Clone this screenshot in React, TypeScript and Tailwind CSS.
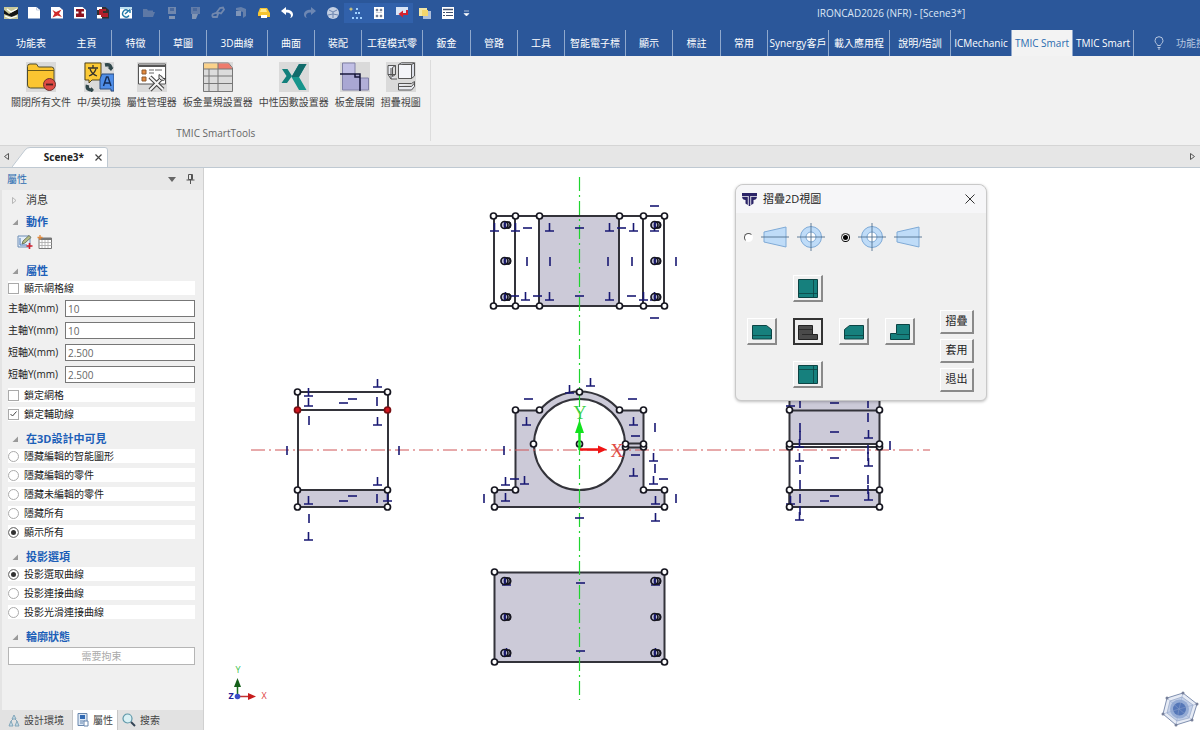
import React from "react";

type Pt = [number, number];

/* ---------- Quick access bar ---------- */

const Svg = ({ size = 14, children, box = "0 0 14 14" }: { size?: number; children: React.ReactNode; box?: string }) => (
  <svg width={size} height={size} viewBox={box} fill="none" aria-hidden="true">
    {children}
  </svg>
);

const Sheet = () => <path d="M1 1h8.5L13 4v8.500H1z" fill="#fff" />;

const quickIcons: { name: string; lit?: boolean; art: React.ReactNode }[] = [
  { name: "New", art: <><Sheet /><path d="M9.500 1v3H13" stroke="#b9c6dc" strokeWidth=".8" /></> },
  { name: "New part", art: <><Sheet /><path d="M2.500 4l3.500 2L11.500 3.500 9 7.500l3 3.500-4.500-1.500L2.500 11.500l2-4z" fill="#d12a2a" /></> },
  { name: "New scene", art: <><Sheet /><path d="M3 3h8v2.500H8.500v2H11V11H3V7.500h2.500v-2H3z" fill="#8f1420" /></> },
  { name: "New drawing", art: <><path d="M1 1h8.500L13 4v8.500H1z" fill="#33302f" /><path d="M1 1h5v3H1zM1 9h5v3.500H1z" fill="#fff" /><path d="M3 3h7v2H7v2h5v4H5V9H3z" fill="#b3202b" /></> },
  { name: "Refresh", art: <><Sheet /><rect x="1" y="1" width="12" height="2" fill="#bfe0f0" /><path d="M9 4.500a3.500 3.500 0 1 0 1 5M6 8l5-4.500M11 3.500V7" stroke="#2279a8" strokeWidth="1.400" /></> },
  { name: "Open", art: <path d="M1 3h4l1 1.500h5V6h2l-2 5H1z" fill="#5e79a6" /> },
  { name: "Save", art: <><path d="M3 1h8v7H3z" fill="#6f87ae" /><path d="M4 10h6v3H4z" fill="#8194b2" /><path d="M5 2h4v3H5z" fill="#49699d" /></> },
  { name: "Save as", art: <><path d="M3 1h9v7H3z" fill="#627ca8" /><path d="M4 8h6l-2 5H4z" fill="#8295b3" /><path d="M5 2h4v3H5z" fill="#49699d" /></> },
  { name: "Link", art: <path d="M2 11a2 2 0 0 1 0-3l3-1 2 1-1 3zM6 6l3-4 3-.5 1 2-3 4z" stroke="#7188ae" strokeWidth="1.800" /> },
  { name: "Export", art: <><path d="M2 2l5-1 5 2v7l-3 2V6L2 4z" fill="#6580ab" /><path d="M2 5h5v5H2z" fill="#7f95b8" /></> },
  { name: "Print", art: <><path d="M3 2h7l3 5v4H1V7z" fill="#f5c431" /><path d="M4 3h5l1 3H3z" fill="#ffe88c" /><path d="M4 9h6v3H4z" fill="#fff" /><path d="M1 10h3v2H1z" fill="#3b4f74" /></> },
  { name: "Undo", art: <path d="M6 1L1 5l5 4V6.500c3-.3 5 1 5 3.500 0 .7-.4 1.500-1 2 2.500-.6 3-2 3-3.500 0-3-3-5-7-4.800z" fill="#fff" /> },
  { name: "Redo", art: <path d="M8 1l5 4-5 4V6.500C5 6.200 3 7.500 3 10c0 .7.400 1.500 1 2C1.500 11.400 1 10 1 8.500c0-3 3-5 7-4.800z" fill="#6d87b3" /> },
  { name: "Render", art: <><circle cx="7" cy="7" r="6" fill="#c4d0e4" /><path d="M3 4l4 2 4-2M7 6v6M2 9l5-1 5 1" stroke="#6d86b0" /></> },
  { name: "Nodes", lit: true, art: <><path d="M2 1l.7 1.500L4.500 3l-1.800.7L2 5.500l-.7-1.800L-.5 3l1.800-.5z" fill="#e0cf77" /><path d="M7 2h2v2H7zM6 6h2v2H6zM9 6h2v2H9zM3 11h2v2H3zM7 11h2v2H7zM11 11h2v2h-2z" fill="#9fd0ff" /></> },
  { name: "Grid", lit: true, art: <><path d="M2 1h10v12H2z" fill="#fff" /><path d="M4 3h2v2H4zM8 3h2v2H8zM4 9h2v2H4zM8 9h2v2H8zM4 6.500h6" fill="#55617a" stroke="#9aa3b5" strokeWidth=".5" /></> },
  { name: "Monitor", lit: true, art: <><path d="M1 1h12v8H1z" fill="#d9e5f7" /><path d="M12 4v4H7" stroke="#d3222f" strokeWidth="2" /><path d="M8 4.500L3.500 8 8 11.500z" fill="#d3222f" /></> },
  { name: "Copy", art: <><path d="M1 2h8v8H1z" fill="#f3e6a3" /><path d="M5 5h8v8H5z" fill="#aebfdb" /><path d="M4 4h6v6H4z" fill="#f5d66b" /></> },
  { name: "List", art: <><path d="M1 1h12v12H1z" fill="#fff" /><path d="M2 3.500h10" stroke="#41516f" strokeWidth="1.500" /><path d="M5 6.500h7M5 9.500h7M2 6.500h2M2 9.500h2" stroke="#41516f" /></> },
];

const QuickBar = () => (
  <header className="flex h-[30px] shrink-0 items-center bg-[#2b579a] pb-1">
    <div className="flex flex-1 items-center">
      <span className="flex w-[22px] items-center justify-center">
        <Svg>
          <path d="M0 1h14v12H0z" fill="#c9c99b" />
          <path d="M0 4l5 4 9-5v5l-6 3-8-3z" fill="#141414" />
          <path d="M3 3l4 3 6-3M1 10l5 2 7-2" stroke="#fff" strokeWidth="1.200" />
        </Svg>
      </span>
      {quickIcons.map((q) => (
        <button key={q.name} aria-label={q.name} className={q.lit ? "flex h-5 w-[23px] items-center justify-center bg-[#3161ab]" : "flex h-5 w-[23px] items-center justify-center"}>
          <Svg>{q.art}</Svg>
        </button>
      ))}
      <button aria-label="Customize" className="flex h-5 w-3.5 items-center justify-center">
        <Svg size={7} box="0 0 7 7"><path d="M1 1h5M1 3.500h5L3.500 6z" fill="#fff" stroke="#fff" strokeWidth=".6" /></Svg>
      </button>
    </div>
    <h1 className="w-[383px] text-[10px] text-[#dce6f5]">IRONCAD2026 (NFR) - [Scene3*]</h1>
  </header>
);

/* ---------- Ribbon tabs ---------- */

const tabs: { label: string; w: string }[] = [
  { label: "特徵", w: "w-12" },
  { label: "草圖", w: "w-[47px]" },
  { label: "3D曲線", w: "w-[61px]" },
  { label: "曲面", w: "w-[47px]" },
  { label: "裝配", w: "w-[47px]" },
  { label: "工程模式零", w: "w-[61px]" },
  { label: "鈑金", w: "w-12" },
  { label: "管路", w: "w-[47px]" },
  { label: "工具", w: "w-[47px]" },
  { label: "智能電子標", w: "w-[61px]" },
  { label: "顯示", w: "w-[47px]" },
  { label: "標註", w: "w-12" },
  { label: "常用", w: "w-[47px]" },
  { label: "Synergy客戶", w: "w-[61px]" },
  { label: "載入應用程", w: "w-[61px]" },
  { label: "說明/培訓", w: "w-[61px]" },
  { label: "ICMechanic", w: "w-[61px]" },
  { label: "TMIC Smart", w: "w-[61px]" },
  { label: "TMIC Smart", w: "w-[61px]" },
];

const RibbonTabs = () => (
  <nav className="flex h-[26px] shrink-0 overflow-hidden bg-[#2b579a] text-[10px] text-white">
    <button className="w-[62px] shrink-0">功能表</button>
    <button className="w-[50px] shrink-0 border-r border-[#8fa8cd]">主頁</button>
    {tabs.map((t, i) => (
      <button
        key={i}
        className={`${t.w} flex shrink-0 items-center justify-center border-r border-[#8fa8cd] whitespace-nowrap ${i === 17 ? "bg-[#f3f3f3] text-[#2b6cb0]" : ""}`}
      >
        {t.label}
      </button>
    ))}
    <label htmlFor="search" className="flex w-[42px] shrink-0 items-center justify-center pl-2" aria-label="Search">
      <svg width="10" height="14" viewBox="0 0 10 14" fill="none" stroke="#b7c7e0" aria-hidden="true">
        <path d="M3.500 9.500C3.500 8 1 7 1 4.700a4 4 0 0 1 8 0C9 7 6.500 8 6.500 9.500zM3.500 11.500h3M4 13h2" />
      </svg>
    </label>
    <input id="search" placeholder="功能搜" className="min-w-0 flex-1 bg-transparent outline-none placeholder:text-[#b7c7e0]" defaultValue="" />
  </nav>
);

/* ---------- Ribbon ---------- */

const Tool = ({ label, plain, children }: { label: string; plain?: boolean; children: React.ReactNode }) => (
  <button className="flex flex-col items-center gap-[3px] text-[10px] whitespace-nowrap text-[#444]">
    <svg width="30" height="30" viewBox="0 0 30 30" fill="none" aria-hidden="true">
      {!plain && <rect width="30" height="30" fill="#dadada" />}
      {children}
    </svg>
    <span className="leading-[14px]">{label}</span>
  </button>
);

const Ribbon = () => (
  <section className="flex h-[90px] shrink-0 border-b border-[#d5d5d5] bg-[#f1f1f1]">
    <div className="my-1 flex flex-col border-r border-[#dcdcdc] pr-[9px] pl-[11px]">
      <div className="flex gap-1.5 pt-0.5">
        <Tool label="關閉所有文件">
          <path d="M1.500 4.500Q1.500 2 4 2h6.500l2 3H25.500Q28 5 28 7.500V23q0 3-3 3H4.500q-3 0-3-3z" fill="#fbc531" stroke="#4d4d33" />
          <path d="M2 8.500h26" stroke="#6b5a18" />
          <circle cx="23.500" cy="22.500" r="6" fill="#e04b44" stroke="#6a3330" />
          <path d="M20 22.500h7" stroke="#4a2222" strokeWidth="1.800" />
        </Tool>
        <Tool label="中/英切換">
          <path d="M1 1h16v17H8l-3 3v-3H1z" fill="#fcca35" stroke="#54471a" />
          <path d="M4 6h10M9 3v3M6 7c1.500 4 4 6 7 7M12 7c-1.500 4-4 6-7 7" stroke="#33312b" strokeWidth="1.300" />
          <path d="M18 12h12v17h-3v-2H16V17z" fill="#4f8ee8" stroke="#2b4a7c" />
          <path d="M19.500 24l3-9h1.500l3 9M20.500 21h5.500" stroke="#152d57" strokeWidth="1.400" />
          <path d="M21 3c5-1 6 1 6 4" stroke="#30474b" strokeWidth="3.500" />
          <path d="M23.500 5.500h6L27 9z" fill="#30474b" />
          <path d="M3.500 23c-1 4 1 5 5 5" stroke="#30474b" strokeWidth="3.500" />
          <path d="M7 25l3 3-3 2.500z" fill="#30474b" />
        </Tool>
        <Tool label="屬性管理器">
          <path d="M1.500 2h27v20h-27z" fill="#fff" stroke="#555" />
          <path d="M1.500 4h27" stroke="#555" strokeWidth="2" />
          <path d="M5 8h4v4H5zM5 15h4v4H5z" fill="#e58a3c" stroke="#8c5a30" />
          <path d="M12 8h5M12 11h5M18 8h7" stroke="#666" />
          <path d="M13 15l13 12.500M26 15L13 28" stroke="#444" strokeWidth="4.200" />
          <path d="M13 15l13 12.500M26 15L13 28" stroke="#f5f5f5" strokeWidth="2" />
          <path d="M22 12.500q-1 4 2 5.500t5-1.500l-3 0-1.500-2z" fill="#eee" stroke="#444" />
        </Tool>
        <Tool label="板金量規設置器">
          <path d="M.5 1h25l4 5v23.500H.5z" fill="#dcdcdc" stroke="#777" />
          <path d="M1 1.500h14V7H1z" fill="#fbd28a" />
          <path d="M15 1.500h10.500L29 6v1H15z" fill="#ee7b6c" />
          <path d="M.5 7h29M.5 14h29M.5 21.500h29M6 7v22M15 1v28" stroke="#777" />
        </Tool>
        <Tool label="中性因數設置器">
          <path d="M3 7h5.500l4.500 7-5 7H2.500l5-7z" fill="#13807c" />
          <path d="M20 2h7.500l-7.500 13 7.500 13H20l-7.500-13z" fill="#16958c" />
          <path d="M20 2h7.500l-7.500 13h-7.500z" fill="#126b6b" />
        </Tool>
        <Tool label="板金展開">
          <path d="M2 1h13v12h5v15H2z" fill="#a9a7d3" />
          <path d="M2 1h13v12H2z" fill="#c1bfe5" />
          <path d="M20 16h9v12h-9z" fill="#b1afd8" />
          <path d="M2.500 28V1H15v12M20 16h8.500v12H2.500" stroke="#8080a6" />
          <path d="M0 12h20v17M15 12v3h5" stroke="#16163a" strokeWidth="1.500" />
        </Tool>
        <Tool label="摺疊視圖">
          <path d="M12.500 2.500h13v14h-13z" fill="#f3f4f8" stroke="#555" />
          <path d="M25.500 2.500l3-1.500v13l-3 2.500zM12.500 2.500L15.500.8h13" fill="#dcdfe8" stroke="#555" />
          <path d="M2 3.500h7.500v9H2zM2 12.500L5 17h6M9.500 3.500l-3 2v9l3-2M5 17V6" fill="#e8eaf0" stroke="#555" />
          <path d="M12.500 21.500h13l3-2v5l-3 3.500h-13zM12.500 24.500h13l3-3.500" fill="#e8eaf0" stroke="#555" />
        </Tool>
      </div>
      <p className="mt-auto text-center text-[10px] leading-4 text-[#666]">TMIC SmartTools</p>
    </div>
  </section>
);

const DocTabs = () => (
  <div className="flex h-[22px] shrink-0 items-end border-b border-[#bfc9d2] bg-[#e6e6e6]">
    <button aria-label="Previous" className="flex h-full w-3 items-center justify-center">
      <svg width="5" height="7" viewBox="0 0 5 7" fill="none" stroke="#555"><path d="M4.500.5v6L.5 3.500z" /></svg>
    </button>
    <div className="relative flex h-5 w-24 items-center justify-end gap-2 pr-1">
      <svg className="absolute inset-0 h-full w-full" viewBox="0 0 96 20" preserveAspectRatio="none" aria-hidden="true">
        <path d="M0 20L13 3q2-2.500 5-2.500h75q2.500 0 2.500 2.500v17" fill="#fff" stroke="#bfc9d2" />
      </svg>
      <span className="relative text-[10px] font-bold text-[#222]">Scene3*</span>
      <button aria-label="Close Scene3" className="relative flex h-3 w-3 items-center justify-center">
        <svg width="7" height="7" viewBox="0 0 7 7" stroke="#444" strokeWidth="1.200"><path d="M.5.5l6 6M6.500.5l-6 6" /></svg>
      </button>
    </div>
    <button aria-label="Next" className="ml-auto flex h-full w-4 items-center justify-center">
      <svg width="5" height="7" viewBox="0 0 5 7" fill="none" stroke="#555"><path d="M.5.5v6l4-3z" /></svg>
    </button>
  </div>
);

/* ---------- Property panel ---------- */

const Head = ({ label, closed }: { label: string; closed?: boolean }) => (
  <h2 className={closed ? "flex h-5 items-center gap-2 pl-1 text-[11px] text-[#333]" : "flex h-5 items-center gap-2 pl-1 text-[11px] font-bold text-[#1c5fb8]"}>
    <svg width="6" height="7" viewBox="0 0 6 7" aria-hidden="true">
      {closed ? <path d="M.5.5v6L4 3.500z" fill="none" stroke="#aaa" strokeWidth=".8" /> : <path d="M6 .5V6H.5z" fill="#999" />}
    </svg>
    {label}
  </h2>
);

const Check = ({ label, on }: { label: string; on?: boolean }) => (
  <label className="relative flex h-3.5 items-center gap-[5px] bg-white">
    <input type="checkbox" defaultChecked={on} className="peer h-[11px] w-[11px] shrink-0 appearance-none border border-[#aaa] bg-white" />
    <svg className="absolute top-1 left-0.5 hidden peer-checked:block" width="7" height="6" viewBox="0 0 7 6" fill="none" stroke="#444"><path d="M.5 3L2.500 5l4-4.500" /></svg>
    {label}
  </label>
);

const Radio = ({ label, name, on }: { label: string; name: string; on?: boolean }) => (
  <label className="flex h-3.5 items-center gap-[5px] bg-white">
    <input
      type="radio"
      name={name}
      defaultChecked={on}
      className="h-[11px] w-[11px] shrink-0 appearance-none rounded-full border border-[#aaa] bg-white checked:border-[#888] checked:bg-[#333] checked:shadow-[inset_0_0_0_2px_white]"
    />
    {label}
  </label>
);

const Field = ({ id, label, value }: { id: string; label: string; value: string }) => (
  <div className="flex h-[17px] items-center">
    <label htmlFor={id} className="w-[57px] shrink-0 whitespace-nowrap">{label}</label>
    <input id={id} defaultValue={value} className="h-full min-w-0 flex-1 border border-[#777] bg-white px-0.5 text-[#666]" />
  </div>
);

const Panel = () => (
  <aside className="flex w-[204px] shrink-0 flex-col border-r border-[#d0d0d0] bg-[#f0f0f0] text-[10px] text-[#222]">
    <div className="flex h-[22px] shrink-0 items-center bg-[#e8e8e8] pr-2 pl-[7px]">
      <span className="flex-1 text-[#2b6cb0]">屬性</span>
      <button aria-label="Menu" className="mr-2.5"><svg width="8" height="5" viewBox="0 0 8 5"><path d="M0 0h8L4 5z" fill="#666" /></svg></button>
      <button aria-label="Pin"><svg width="9" height="10" viewBox="0 0 9 10" fill="none" stroke="#555"><path d="M2.500.5h4v5h-4zM5.500 1v4M.5 6h8M4.500 6v4" /></svg></button>
    </div>
    <div className="flex flex-1 flex-col border-l-2 border-[#e4e4e4] pr-2 pl-[6px]">
      <Head label="消息" closed />
      <div className="mt-0.5"><Head label="動作" /></div>
      <div className="flex h-5 items-center gap-1 pl-[9px]">
        <button aria-label="Edit sketch">
          <svg width="16" height="14" viewBox="0 0 16 14" fill="none">
            <path d="M1 1h12v11H1z" fill="#e4eef8" stroke="#6d8db5" />
            <path d="M3 3v7h7" stroke="#4a79b8" />
            <path d="M5 9l1-3 6-5.500 2 2L8 8z" fill="#b5bd85" stroke="#5c6650" strokeWidth=".8" />
            <path d="M12.500 8v6M9.500 11h6" stroke="#d21f2c" strokeWidth="1.600" />
          </svg>
        </button>
        <button aria-label="New table">
          <svg width="16" height="14" viewBox="0 0 16 14" fill="none">
            <path d="M2 3h12.500v10.500H2z" fill="#fff" stroke="#777" />
            <path d="M2 4h12.500" stroke="#777" strokeWidth="2" />
            <path d="M2 7.500h12.500M2 10.500h12.500M5 5v8M8 5v8M11 5v8" stroke="#aaa" strokeWidth=".8" />
            <path d="M3 0v5M.5 2.500h5" stroke="#e2893b" strokeWidth="1.300" />
          </svg>
        </button>
      </div>
      <div className="mt-[9px]"><Head label="屬性" /></div>
      <div className="flex flex-col gap-[5px]">
        <Check label="顯示網格線" />
        <Field id="mx" label="主軸X(mm)" value="10" />
        <Field id="my" label="主軸Y(mm)" value="10" />
        <Field id="sx" label="短軸X(mm)" value="2.500" />
        <Field id="sy" label="短軸Y(mm)" value="2.500" />
        <Check label="鎖定網格" />
        <Check label="鎖定輔助線" on />
      </div>
      <div className="mt-2"><Head label="在3D設計中可見" /></div>
      <div className="flex flex-col gap-[5px]">
        <Radio name="vis" label="隱藏編輯的智能圖形" />
        <Radio name="vis" label="隱藏編輯的零件" />
        <Radio name="vis" label="隱藏未編輯的零件" />
        <Radio name="vis" label="隱藏所有" />
        <Radio name="vis" label="顯示所有" on />
      </div>
      <div className="mt-2"><Head label="投影選項" /></div>
      <div className="flex flex-col gap-[5px]">
        <Radio name="proj" label="投影選取曲線" on />
        <Radio name="proj" label="投影連接曲線" />
        <Radio name="proj" label="投影光滑連接曲線" />
      </div>
      <div className="mt-2"><Head label="輪廓狀態" /></div>
      <button disabled className="h-[18px] border border-[#b5b5b5] bg-white text-[#aaa]">需要拘束</button>
    </div>
    <div className="flex h-5 shrink-0 bg-[#e2e2e2] text-[#444]">
      <button className="flex w-[72px] items-center gap-1 pl-2">
        <svg width="12" height="13" viewBox="0 0 12 13" fill="#c5dbe6" stroke="#7ba0b5" strokeWidth=".9"><path d="M6 1l2 4H4zM3 7l2 5H1zM9 7l2 5H7zM5 5L3 7M7 5l2 2" /></svg>
        設計環境
      </button>
      <button className="flex w-[46px] items-center gap-1 border-x border-[#c8c8c8] bg-white pl-1">
        <svg width="12" height="14" viewBox="0 0 12 14" fill="none"><path d="M1 .5h9v12H1z" fill="#dce8f5" stroke="#6886ad" /><path d="M3 2h5v4H3z" fill="#336bb4" /><path d="M3 8h5M3 10h3" stroke="#6886ad" /><path d="M7 8h4v5H7z" fill="#fff" stroke="#6886ad" /></svg>
        屬性
      </button>
      <button className="flex items-center gap-1 pl-1">
        <svg width="14" height="14" viewBox="0 0 14 14" fill="none"><circle cx="5.500" cy="5.500" r="4.500" fill="#d9f0f4" stroke="#5d97a8" strokeWidth="1.200" /><path d="M9 9l4 4" stroke="#345" strokeWidth="2" /></svg>
        搜索
      </button>
    </div>
  </aside>
);

/* ---------- Sketch canvas ---------- */

const perps: Pt[] = [
  [494, 231], [515, 231], [549, 231], [609, 231], [633, 231], [654, 231],
  [505, 300], [525, 300], [549, 300], [609, 300], [643, 300], [654, 300],
  [308, 396], [308, 406], [377, 387], [377, 425], [377, 485], [308, 504], [387, 501], [308, 540],
  [569, 393], [590, 386], [526, 425], [633, 425], [633, 476], [505, 485], [524, 484], [505, 501],
  [653, 461], [653, 484], [655, 504], [655, 521],
  [799, 447], [799, 461], [799, 520], [790, 504], [868, 438], [868, 466], [868, 500],
  [506, 585], [655, 585], [506, 656], [655, 656],
];
const horizontals: Pt[] = [
  [654, 206], [654, 318], [527, 228], [579, 228], [621, 228], [514, 296], [537, 296], [579, 296], [631, 296],
  [343, 403], [352, 399], [343, 501], [352, 496],
  [528, 399], [632, 399], [635, 436], [635, 455], [514, 479], [663, 479], [579, 518],
  [834, 403], [834, 432], [834, 458], [834, 496], [824, 501], [790, 406],
  [580, 583], [580, 651],
];
const verticals: Pt[] = [
  [527, 261], [550, 261], [608, 261], [632, 261], [676, 261],
  [377, 401], [309, 420], [377, 498], [309, 518], [287, 450], [399, 450],
  [504, 450], [655, 427], [655, 468], [484, 498], [676, 498],
  [800, 403], [800, 427], [800, 435], [800, 469], [800, 484], [800, 498], [800, 510],
  [868, 403], [868, 417], [868, 449], [868, 456], [868, 479], [868, 489], [890, 445],
];
const nodes: Pt[] = [
  ...[493, 515, 539, 619, 643, 664].flatMap((x): Pt[] => [[x, 216], [x, 306]]),
  ...[297, 387].flatMap((x): Pt[] => [[x, 392], [x, 490], [x, 507]]),
  [579, 392], [515, 410], [539, 410], [619, 410], [643, 410], [533, 444], [579, 444],
  [625, 447], [643, 447], [625, 444], [643, 444], [494, 490], [515, 490], [643, 490], [664, 490], [494, 507], [664, 507],
  ...[789, 879].flatMap((x): Pt[] => [[x, 410], [x, 447], [x, 444], [x, 490], [x, 507]]),
  [494, 572], [664, 572], [494, 662], [664, 662],
];
const rings: Pt[] = [225, 261, 297, 581, 617, 653].flatMap((y): Pt[] => [[505, y], [655, y]]);

const corners: Pt[] = [[1183, 693], [1197, 704], [1192, 720], [1176, 725], [1163, 714], [1167, 698]];

const Drawing = () => (
  <svg className="block h-full w-full" viewBox="204 168 996 562" fill="none" role="img" aria-label="Scene3">
    <g stroke="#33333a" strokeWidth="2">
      <path d="M494 216H664V306H494z" />
      <path d="M539 216H619V306H539z" fill="#cccad8" />
      <path d="M515 216V306M643 216V306" />
      <path d="M298 490H388V507H298z" fill="#cccad8" />
      <path d="M298 392H388V507H298zM298 410H388" />
      <path d="M515.500 410.500H539.500A51.600 51.600 0 0 1 619.500 410.500H643.500V490H664.500V507H494.500V490H515.500z" fill="#cccad8" />
      <circle cx="579.500" cy="444.500" r="45.500" fill="#fff" />
      <path d="M625 443.500H643M625 447.500H643" />
      <path d="M789.500 392H879.500V444H789.500zM789.500 490H879.500V507H789.500z" fill="#cccad8" />
      <path d="M789.500 410.500H879.500M789.500 447H879.500M789.500 444V507M879.500 444V507" />
      <path d="M494.500 572.500H664.500V662H494.500z" fill="#cccad8" />
    </g>
    <path d="M251 450H930" stroke="#cf5556" strokeDasharray="14 4 2 4" />
    <path d="M579.500 177V700" stroke="#1fd52f" strokeWidth="1.200" strokeDasharray="14 4 2 4" />
    <g stroke="#181873" strokeWidth="1.600">
      {perps.map(([x, y], i) => <path key={i} d={`M${x - 4} ${y}h9M${x + 0.5} ${y}v-8`} />)}
      {horizontals.map(([x, y], i) => <path key={i} d={`M${x - 4} ${y}h9`} />)}
      {verticals.map(([x, y], i) => <path key={i} d={`M${x} ${y - 4}v9`} />)}
    </g>
    <g stroke="#161620" strokeWidth="1.700">
      {rings.map(([x, y], i) => (
        <g key={i}>
          <circle cx={x + 2.5} cy={y} r="3" fill="#f4f4fa" />
          <circle cx={x - 0.5} cy={y} r="3.500" fill="#b9b9d6" />
          <circle cx={x + 2.5} cy={y} r="3" />
          <path d={`M${x} ${y - 3}v6`} stroke="#181873" />
        </g>
      ))}
      {nodes.map(([x, y], i) => <circle key={i} cx={x + 0.5} cy={y} r="3" fill="#fff" />)}
      <circle cx="297.500" cy="410" r="3" fill="#d3141f" stroke="#7a1014" />
      <circle cx="387.500" cy="410" r="3" fill="#d3141f" stroke="#7a1014" />
    </g>
    <path d="M579.500 450V430" stroke="#12e21e" strokeWidth="2.500" />
    <path d="M575 433L579.500 420L584 433z" fill="#12e21e" />
    <path d="M580 449.500H599" stroke="#f01414" strokeWidth="2.500" />
    <path d="M598 445.500L607 449.500L598 453.500z" fill="#f01414" />
    <text x="617" y="457" textAnchor="middle" fontSize="18" fill="#e04a44" className="font-['Liberation_Serif',serif]">X</text>
    <text x="580" y="419" textAnchor="middle" fontSize="18" fill="#38d144" className="font-['Liberation_Serif',serif]">Y</text>
    <g>
      <path d="M237.500 696V684" stroke="#196e1d" strokeWidth="1.500" />
      <path d="M234 687L237.500 678L241 687z" fill="#145f19" />
      <path d="M238 696.500H250" stroke="#c23131" strokeWidth="1.500" />
      <path d="M248 693L256 696.500L248 700z" fill="#c71c1c" />
      <circle cx="237.500" cy="696.500" r="2.800" fill="#3b4ec8" />
      <text x="238" y="673" textAnchor="middle" fontSize="9" fill="#3cc24c">Y</text>
      <text x="264" y="699" textAnchor="middle" fontSize="9" fill="#e04040">X</text>
      <text x="231" y="699" textAnchor="middle" fontSize="9" fontWeight="bold" fill="#24249a">Z</text>
    </g>
    <path d="M1183 693L1197 704L1192 720L1176 725L1163 714L1167 698z" fill="#e6ebf5" stroke="#8090b0" />
    <path d="M1182 697L1193 705L1189 718L1177 721L1167 713L1170 701z" fill="#c3d0e8" stroke="#9dadcb" strokeWidth=".8" />
    <circle cx="1179.500" cy="709" r="9.500" fill="#8aa3d0" opacity=".8" />
    <circle cx="1179.500" cy="709" r="6.500" fill="#5577b8" />
    <path d="M1183 693L1179 709L1197 704M1192 720L1179 709L1176 725M1163 714L1179 709L1167 698" stroke="#8fa3cb" strokeWidth=".7" opacity=".7" />
    {corners.map(([x, y], i) => <circle key={i} cx={x} cy={y} r="1.500" fill="#77809a" />)}
  </svg>
);

/* ---------- Fold-views dialog ---------- */

const Cone = () => (
  <svg width="28" height="26" viewBox="0 0 28 26" fill="none" aria-hidden="true">
    <path d="M3 8L25 3V23L3 18z" fill="#bfdcf8" stroke="#7faad6" />
    <path d="M0 13H28" stroke="#51708f" strokeWidth=".9" />
  </svg>
);
const Target = () => (
  <svg width="28" height="28" viewBox="0 0 28 28" fill="none" aria-hidden="true">
    <circle cx="14" cy="14" r="10.500" fill="#bfdcf8" stroke="#7faad6" />
    <circle cx="14" cy="14" r="5" fill="#fff" stroke="#7faad6" />
    <path d="M0 14H28M14 0V28" stroke="#51708f" strokeWidth=".9" />
  </svg>
);

const dialogRadio = "h-[9px] w-[9px] shrink-0 appearance-none rounded-full border border-transparent border-t-[#555] border-l-[#555] bg-white checked:bg-black checked:shadow-[inset_0_0_0_1px_white]";

const ViewButton = ({ name, place, active, body, detail }: { name: string; place: string; active?: boolean; body: string; detail: string }) => (
  <button
    aria-label={name}
    className={`${place} flex h-[27px] items-center justify-center ${active ? "border-2 border-[#333] bg-[#eee]" : "border-t border-r-2 border-b-2 border-l border-t-white border-r-[#8a8a8a] border-b-[#8a8a8a] border-l-white"}`}
  >
    <svg width="22" height="21" viewBox="0 0 22 21" fill="none" stroke={active ? "#222" : "#0c4444"} aria-hidden="true">
      <path d={body} fill={active ? "#4a4a4a" : "#16807d"} />
      <path d={detail} strokeWidth=".8" />
    </svg>
  </button>
);

const Dialog = () => (
  <section role="dialog" aria-label="摺疊2D視圖" className="absolute top-4 left-[531px] w-[252px] rounded-lg rounded-b-md border border-[#c9c9c9] bg-[#f0f0f0] text-[#222] shadow-[0_1px_3px_rgba(0,0,0,0.25)]">
    <div className="flex h-7 items-center gap-1.5 rounded-t-lg bg-[#f6f6f8] pr-[11px] pl-1.5">
      <svg width="15" height="14" viewBox="0 0 15 14" fill="#2b2467" aria-hidden="true">
        <path d="M0 1H15V4H0z" />
        <path d="M0 4.800H5.800V13L3.500 11.500V8Q.5 8 0 4.800zM15 4.800H9.200V13L11.500 11.500V8Q14.500 8 15 4.800zM6.700 4H8.300V14H6.700z" />
      </svg>
      <h2 className="flex-1 text-[11px]">摺疊2D視圖</h2>
      <button aria-label="Close"><svg width="10" height="10" viewBox="0 0 10 10" stroke="#333" fill="none"><path d="M.5.5l9 9M9.500.5l-9 9" /></svg></button>
    </div>
    <div className="mt-2.5 flex h-7 items-center pl-2">
      <label className="flex items-center gap-2"><input type="radio" name="angle" aria-label="First angle" className={dialogRadio} /><Cone /><Target /></label>
      <label className="ml-4 flex items-center gap-2"><input type="radio" name="angle" aria-label="Third angle" defaultChecked className={dialogRadio} /><Target /><Cone /></label>
    </div>
    <div className="mt-6 flex items-end justify-between pr-3 pb-3 pl-[11px]">
      <div className="grid grid-cols-[repeat(4,30px)] gap-4">
        <ViewButton name="Top" place="col-start-2" body="M1.500 1.500h19v18h-19z" detail="M16.500 1.500v18M1.500 15.500h19" />
        <ViewButton name="Left" place="col-start-1 row-start-2" body="M1.500 4.500h14l5 4v9.500h-19z" detail="M1.500 14.500h19" />
        <ViewButton name="Front" place="col-start-2 row-start-2" active body="M1.500 4.500h14v9h5v5h-19z" detail="M1.500 8.500h14M5 13.500h11" />
        <ViewButton name="Right" place="col-start-3 row-start-2" body="M20.500 4.500h-14l-5 4v9.500h19z" detail="M1.500 14.500h19" />
        <ViewButton name="Back" place="col-start-4 row-start-2" body="M20.500 3.500h-13v9h-6v6h19z" detail="M7.500 13.500h13" />
        <ViewButton name="Bottom" place="col-start-2 row-start-3" body="M1.500 1.500h19v18h-19z" detail="M16.500 1.500v18M1.500 5.500h19" />
      </div>
      <div className="-mb-1 flex flex-col gap-[5px] text-[11px]">
        {["摺疊", "套用", "退出"].map((t) => (
          <button key={t} className="h-6 w-[34px] border-t border-r-2 border-b-2 border-l border-t-white border-r-[#8a8a8a] border-b-[#8a8a8a] border-l-white">{t}</button>
        ))}
      </div>
    </div>
  </section>
);

export default function App() {
  return (
    <div className="flex h-screen min-h-[730px] flex-col overflow-hidden bg-white font-['Open_Sans','Noto_Sans_CJK_TC',sans-serif]">
      <QuickBar />
      <RibbonTabs />
      <Ribbon />
      <DocTabs />
      <div className="flex min-h-0 flex-1">
        <Panel />
        <main className="relative min-w-0 flex-1">
          <Drawing />
          <Dialog />
        </main>
      </div>
    </div>
  );
}
